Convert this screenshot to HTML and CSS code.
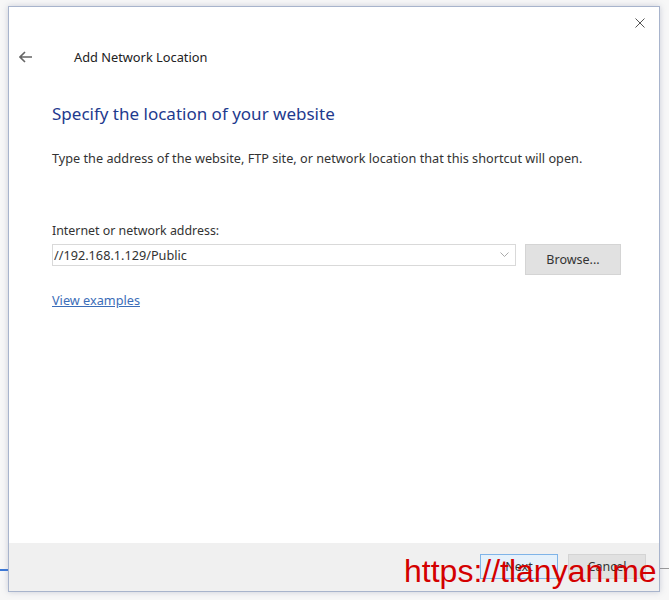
FILE: index.html
```html
<!DOCTYPE html>
<html lang="en">

<head>
  <meta charset="UTF-8">
  <meta name="viewport" content="width=device-width, initial-scale=1.0">
  <title>Add Network Location</title>
  <link rel="stylesheet" href="styles.css">
</head>

<body>
  <div class="desk-line desk-line--left"></div>
  <div class="desk-line desk-line--right"></div>

  <div class="wizard">
    <div class="wizard__titlebar">
      <button class="wizard__close" aria-label="Close">
        <svg width="10" height="10" viewBox="0 0 10 10">
          <path d="M0.5 0.5 L9.5 9.5 M9.5 0.5 L0.5 9.5" stroke="#555" stroke-width="1" fill="none"/>
        </svg>
      </button>
    </div>

    <div class="wizard__header">
      <button class="wizard__back" aria-label="Back">
        <svg width="14" height="12" viewBox="0 0 14 12">
          <path d="M1 6 H13 M6 1 L1 6 L6 11" stroke="#666" stroke-width="1.6" fill="none"/>
        </svg>
      </button>
      <span class="wizard__caption">Add Network Location</span>
    </div>

    <div class="wizard__body">
      <h1 class="wizard__heading">Specify the location of your website</h1>
      <p class="wizard__text">Type the address of the website, FTP site, or network location that this shortcut will open.</p>

      <label class="field__label" for="address">Internet or network address:</label>
      <div class="field">
        <div class="combo">
          <input class="combo__input" id="address" type="text" value="//192.168.1.129/Public">
          <svg class="combo__arrow" width="9" height="6" viewBox="0 0 9 6">
            <path d="M0.5 0.5 L4.5 4.5 L8.5 0.5" stroke="#aaa" stroke-width="1" fill="none"/>
          </svg>
        </div>
        <button class="btn btn--browse">Browse...</button>
      </div>

      <a class="wizard__link" href="#">View examples</a>
    </div>

    <div class="wizard__footer">
      <button class="btn btn--footer btn--default">Next</button>
      <button class="btn btn--footer">Cancel</button>
    </div>
  </div>

  <div class="watermark">https://tlanyan.me</div>
</body>

</html>
```

FILE: styles.css
```css
body {
  margin: 0;
  height: 600px;
  background-color: #f7f7f7;
  font-family: "Noto Sans", "Open Sans", sans-serif;
  color: #222;
  position: relative;
  overflow: hidden;
}

.desk-line {
  position: absolute;
  height: 2px;
}

.desk-line--left {
  left: 0;
  top: 569px;
  width: 10px;
  background-color: #3b78d8;
}

.desk-line--right {
  right: 0;
  top: 568px;
  width: 12px;
  height: 1px;
  background-color: #999;
}

.wizard {
  position: relative;
  margin: 6px 0 0 8px;
  width: 650px;
  height: 584px;
  border: 1px solid #a8b4cc;
  background-color: #fff;
  box-shadow: 0 0 6px rgba(120, 130, 160, 0.35);
  display: flex;
  flex-direction: column;
}

.wizard__titlebar {
  height: 31px;
  display: flex;
  justify-content: flex-end;
}

.wizard__close {
  width: 46px;
  height: 31px;
  border: none;
  background: none;
  padding: 0;
  display: flex;
  align-items: center;
  justify-content: center;
  margin-right: -4px;
}

.wizard__header {
  height: 38px;
  display: flex;
  align-items: center;
}

.wizard__back {
  width: 30px;
  margin-left: 2px;
  border: none;
  background: none;
  padding: 0;
  display: flex;
  justify-content: center;
}

.wizard__caption {
  margin-left: 33px;
  font-size: 12.8px;
  color: #222;
}

.wizard__body {
  flex: 1;
  padding: 27px 0 0 43px;
}

.wizard__heading {
  margin: 0;
  font-size: 17px;
  font-weight: normal;
  color: #1e3a8e;
  line-height: 22px;
}

.wizard__text {
  margin: 25px 0 0;
  font-size: 12.7px;
  line-height: 16px;
  color: #333;
}

.field__label {
  display: block;
  margin-top: 57px;
  font-size: 12.4px;
  line-height: 16px;
  color: #333;
}

.field {
  margin-top: 5px;
  display: flex;
  align-items: flex-start;
}

.combo {
  width: 462px;
  height: 20px;
  border: 1px solid #d9d9d9;
  display: flex;
  align-items: center;
}

.combo__input {
  flex: 1;
  border: none;
  outline: none;
  padding: 0 0 0 1px;
  font-family: inherit;
  font-size: 12.7px;
  color: #333;
  background: none;
}

.combo__arrow {
  margin-right: 6px;
}

.btn {
  font-family: inherit;
  font-size: 12.5px;
  color: #333;
  background-color: #e1e1e1;
  border: 1px solid #d4d4d4;
}

.btn--browse {
  margin-left: 9px;
  width: 96px;
  height: 31px;
}

.wizard__link {
  display: inline-block;
  margin-top: 16px;
  font-size: 12.7px;
  color: #3b6db8;
}

.wizard__footer {
  height: 48px;
  background-color: #f0f0f0;
  display: flex;
  justify-content: flex-end;
  align-items: flex-start;
  padding: 11px 13px 0 0;
  box-sizing: border-box;
  gap: 10px;
}

.btn--footer {
  width: 78px;
  height: 25px;
}

.btn--default {
  background-color: #e5f1fb;
  border-color: #7fb4e8;
}

.watermark {
  position: absolute;
  left: 404px;
  top: 553px;
  font-family: "Liberation Sans", Arial, sans-serif;
  font-size: 32px;
  color: #d40000;
}
```
